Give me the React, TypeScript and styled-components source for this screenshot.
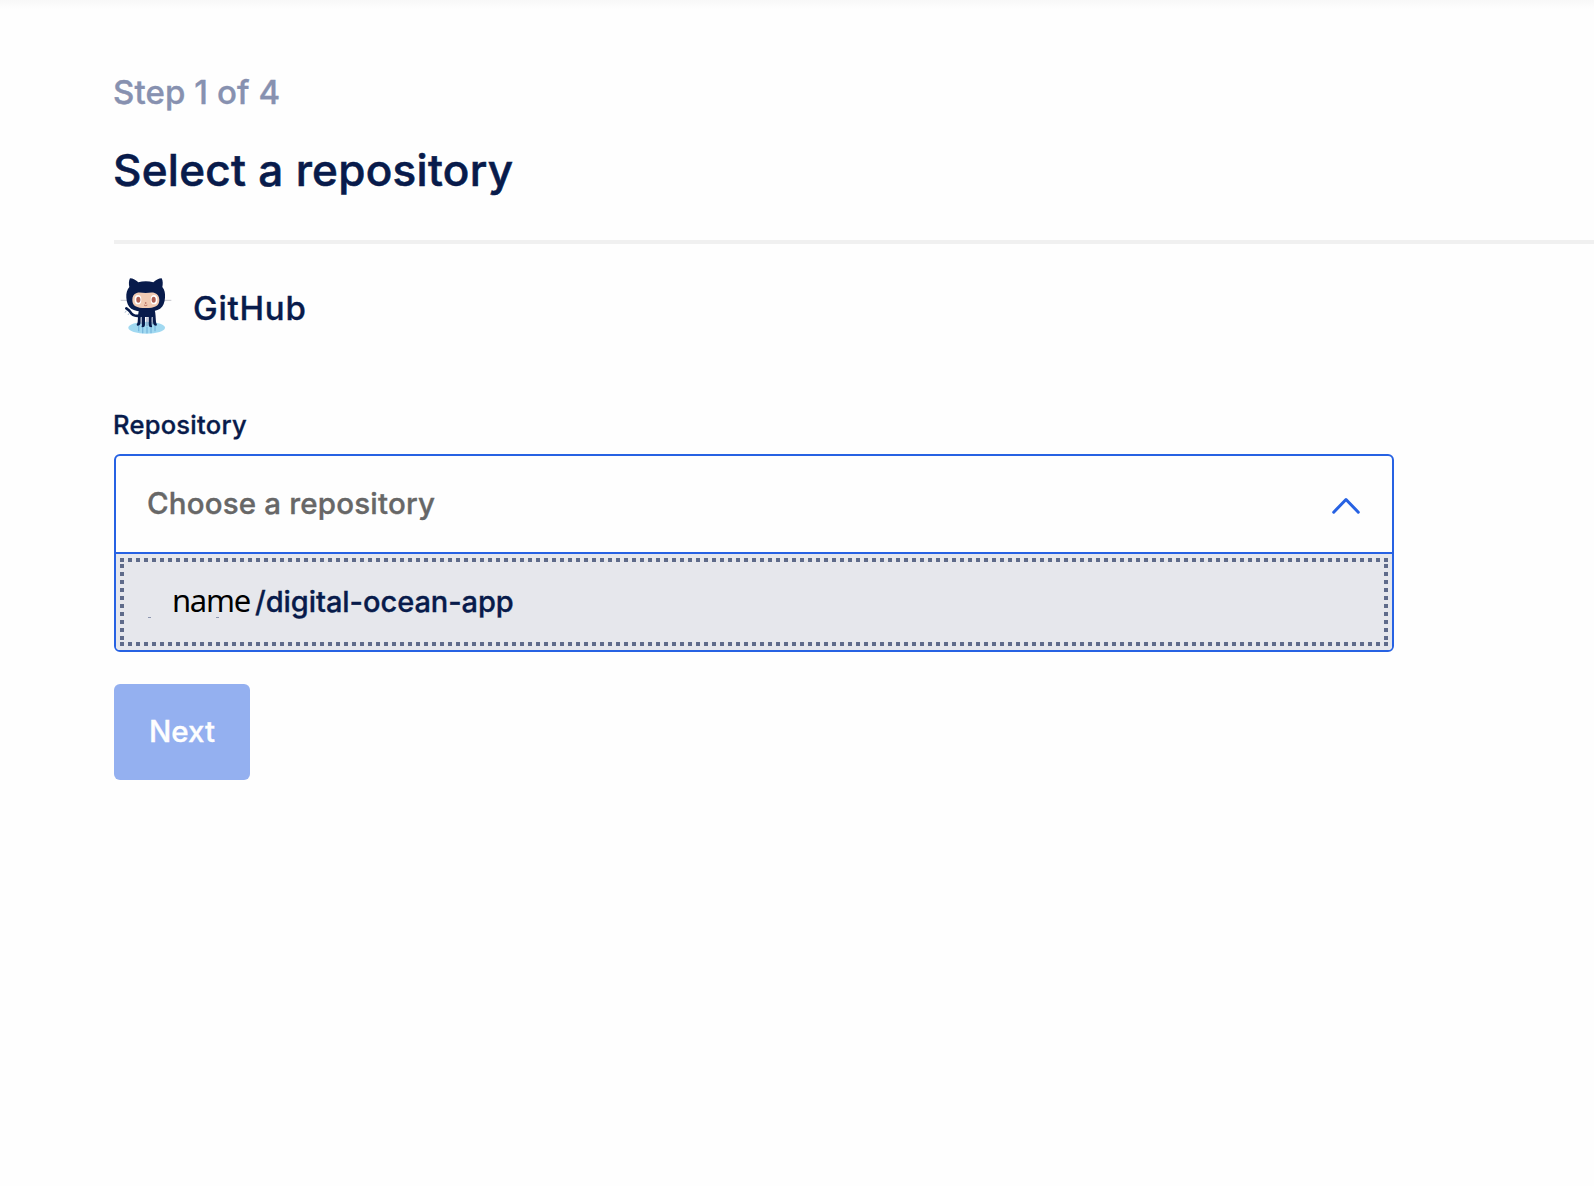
import React from "react";
import styled, { createGlobalStyle } from "styled-components";

const navy = "#081b4b";
const blue = "#2762e3";

const GlobalStyle = createGlobalStyle`
  * { box-sizing: border-box; }
  body { margin: 0; background: #fefefe; overflow: hidden; }
`;

const Page = styled.main`
  min-height: 1186px;
  padding: 72px 0 0 114px;
  background: linear-gradient(#f8f8f8, #fefefe 9px);
  color: ${navy};
  font-family: Inter, "Liberation Sans", sans-serif;
  font-weight: 500;
  -webkit-text-stroke-width: 0.35px;
  white-space: nowrap;
`;

const Header = styled.header`
  padding-bottom: 42px;
  border-bottom: 4px solid #f0f0f0;
`;

const StepText = styled.p`
  margin: 0 0 0 -1px;
  color: #8791b0;
  font-size: 33px;
  line-height: 40px;
  letter-spacing: 0.1px;
`;

const Title = styled.h1`
  margin: 30px 0 0 -1px;
  font-size: 44px;
  font-weight: 500;
  line-height: 56px;
  letter-spacing: 0.29px;
  -webkit-text-stroke-width: 0.6px;
`;

const Provider = styled.section`
  display: flex;
  gap: 19px;
  padding: 26px 0 0 4px;
`;

const ProviderName = styled.h2`
  margin: 18px 0 0;
  font-size: 33px;
  font-weight: 500;
  line-height: 40px;
  letter-spacing: 0.75px;
`;

const Field = styled.section`
  width: 1280px;
  margin-top: 73px;
`;

const Label = styled.label`
  display: block;
  margin-bottom: 13px;
  margin-left: -1px;
  font-size: 25.5px;
  line-height: 32px;
  letter-spacing: 0.26px;
`;

const Select = styled.div`
  height: 198px;
  border: 2px solid ${blue};
  border-radius: 6px;
  overflow: hidden;
  font-size: 29.5px;
  line-height: 40px;
`;

const Control = styled.div`
  display: flex;
  align-items: center;
  justify-content: space-between;
  height: 98px;
  padding: 0 32px 0 31px;
  border-bottom: 2px solid ${blue};

  svg { margin-top: 4px; }
`;

const Placeholder = styled.span`
  padding-bottom: 2px;
  color: #676767;
  letter-spacing: 0.18px;
`;

const Option = styled.div`
  height: 96px;
  padding: 4px;
  background: #e6e7ec;
`;

const dot = "#5f6b8a";
const dotsX = `repeating-linear-gradient(90deg, ${dot} 0 4px, transparent 4px 8px)`;
const dotsY = `repeating-linear-gradient(180deg, ${dot} 0 4px, transparent 4px 8px)`;

/* Focus ring of square dots on an 8px pitch, with separate side columns. */
const FocusRing = styled.div`
  display: flex;
  align-items: baseline;
  height: 88px;
  padding: 22px 0 0 52px;
  background:
    ${dotsX} 0 0 / 100% 4px no-repeat,
    ${dotsX} 0 100% / 100% 4px no-repeat,
    ${dotsY} 0 6px / 4px 76px no-repeat,
    ${dotsY} 100% 6px / 4px 76px no-repeat,
    linear-gradient(#8d96b0, #8d96b0) 28px 59px / 3px 1px no-repeat,
    linear-gradient(#8d96b0, #8d96b0) 96px 59px / 3px 1px no-repeat;
`;

const Owner = styled.span`
  width: 81px;
  color: #000;
  font-family: "Noto Sans", sans-serif;
  font-size: 31px;
  font-weight: 400;
  letter-spacing: -1.3px;
  -webkit-text-stroke-width: 0;
`;

const RepoName = styled.span`
  margin-left: 2px;
  font-size: 29px;
  letter-spacing: -0.05px;
`;

const NextButton = styled.button`
  display: flex;
  align-items: center;
  justify-content: center;
  width: 136px;
  height: 96px;
  margin-top: 32px;
  padding: 0 0 2px 0;
  border: 0;
  border-radius: 6px;
  background: #94b0f0;
  color: #fefefe;
  font: 500 29.5px Inter, sans-serif;
`;

function Octocat() {
  return (
    <svg width="56" height="66" viewBox="0 0 168 198" fill={navy}>
      <ellipse cx="86" cy="173" rx="55" ry="18" fill="#a1d9f1" />
      <path d="M62 164v20M74 170v20M87 170v20M99 170v20M111 164v20" stroke="#79b9de" strokeWidth="4" fill="none" />
      <path d="M8 91h22M138 91h22" stroke="#b9bcc4" strokeWidth="2.5" />
      <path d="M25 115c5 3 9 5 12 11 5 10 13 13 28 11" fill="none" stroke={navy} strokeWidth="8" strokeLinecap="round" />
      <path d="M25 122l-4 6M33 130l-3 5" stroke="#7996b2" strokeWidth="2" />
      <path d="M63 120h47c3 10 3 26 4 36 1 6 5 7 1 11-7 0-10-4-10-12v-13h-4v22c0 4 3 5 0 8-8 0-9-4-9-10v-21h-11v21c0 6-1 10-9 10-3-3 0-4 0-8v-22h-4v13c0 8-3 12-10 12-4-4 0-5 1-11 1-10 1-26 4-36z" />
      <path d="M70 142v21M87 142v26M103 142v21" stroke="#8593b3" strokeWidth="3" />
      <path d="M36 25c9 0 18 6 25 12 14-4 31-4 45 0 7-6 16-12 25-12 4 8 4 17 2 26 7 9 9 19 8 32-2 31-18 42-58 42s-56-11-58-42c-1-13 2-23 9-32-2-9-2-18 2-26z" />
      <path d="M56 69c9-3 18 0 27 0s18-3 27 0c9 3 14 11 14 20 0 19-13 25-41 25s-40-6-40-25c0-9 4-17 13-20z" fill="#f1cbb3" />
      <ellipse cx="60" cy="89" rx="10" ry="14" fill="#fff" />
      <ellipse cx="108" cy="89" rx="10" ry="14" fill="#fff" />
      <ellipse cx="61" cy="89" rx="6.2" ry="9" fill="#ad5e52" />
      <ellipse cx="107" cy="89" rx="6.2" ry="9" fill="#ad5e52" />
      <circle cx="83" cy="99" r="2.5" fill="#ad5e52" />
      <path d="M78 105q5 4 10 0" stroke="#ad5e52" strokeWidth="2.4" fill="none" />
    </svg>
  );
}

function ChevronUp() {
  return (
    <svg width="28" height="18" viewBox="0 0 28 18" fill="none" stroke={blue} strokeWidth="3" strokeLinecap="round" strokeLinejoin="round">
      <path d="M1.7 15.2 14 2.5l12.3 12.7" />
    </svg>
  );
}

export default function App() {
  return (
    <>
      <GlobalStyle />
      <Page>
        <Header>
          <StepText>Step 1 of 4</StepText>
          <Title>Select a repository</Title>
        </Header>
        <Provider>
          <Octocat />
          <ProviderName>GitHub</ProviderName>
        </Provider>
        <Field>
          <Label>Repository</Label>
          <Select>
            <Control>
              <Placeholder>Choose a repository</Placeholder>
              <ChevronUp />
            </Control>
            <Option>
              <FocusRing>
                <Owner>name</Owner>
                <RepoName>/digital-ocean-app</RepoName>
              </FocusRing>
            </Option>
          </Select>
        </Field>
        <NextButton>Next</NextButton>
      </Page>
    </>
  );
}
